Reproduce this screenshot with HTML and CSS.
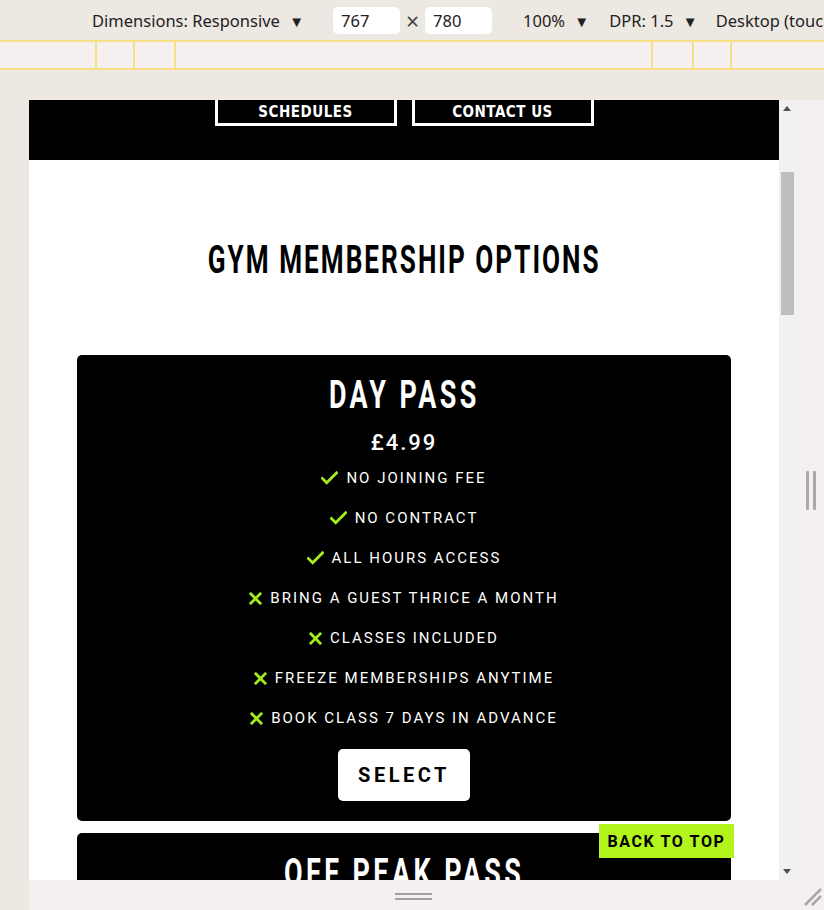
FILE: index.html
```html
<!DOCTYPE html>
<html lang="en">
<head>
<meta charset="utf-8">
<title>Gym Membership Options</title>
<link rel="stylesheet" href="styles.css">
</head>
<body>
<div class="devtools">
  <div class="toolbar">
    <span class="tb-item">Dimensions: Responsive <span class="caret">▼</span></span>
    <span class="dims"><span class="tb-input">767</span><span class="times">×</span><span class="tb-input">780</span></span>
    <span class="tb-item zoomsel">100% <span class="caret">▼</span></span>
    <span class="tb-item dpr">DPR: 1.5 <span class="caret">▼</span></span>
    <span class="tb-item device">Desktop (touch)</span>
  </div>
  <div class="ruler">
    <span class="tick" style="left:95px"></span>
    <span class="tick" style="left:133px"></span>
    <span class="tick" style="left:174px"></span>
    <span class="tick" style="left:651px"></span>
    <span class="tick" style="left:692px"></span>
    <span class="tick" style="left:730px"></span>
  </div>
  <div class="gutter"></div>
  <div class="stage">
    <div class="left-pad"></div>
    <div class="frame">
      <div class="device-row">
        <div class="viewport">
          <header class="site-header">
            <nav class="nav">
              <a class="nav-btn">SCHEDULES</a>
              <a class="nav-btn">CONTACT US</a>
            </nav>
          </header>
          <section class="memberships">
            <h2 class="section-title"><span class="narrow">GYM MEMBERSHIP OPTIONS</span></h2>
            <div class="card">
              <h3 class="card-title"><span class="narrow">DAY PASS</span></h3>
              <p class="price">£4.99</p>
              <ul class="features">
                <li><svg class="ico" viewBox="0 0 18 14"><polyline points="1.5,7.5 6,12 16.5,1.5"/></svg>NO JOINING FEE</li>
                <li><svg class="ico" viewBox="0 0 18 14"><polyline points="1.5,7.5 6,12 16.5,1.5"/></svg>NO CONTRACT</li>
                <li><svg class="ico" viewBox="0 0 18 14"><polyline points="1.5,7.5 6,12 16.5,1.5"/></svg>ALL HOURS ACCESS</li>
                <li><svg class="ico x" viewBox="0 0 14 14"><path d="M2 2 L12 12 M12 2 L2 12"/></svg>BRING A GUEST THRICE A MONTH</li>
                <li><svg class="ico x" viewBox="0 0 14 14"><path d="M2 2 L12 12 M12 2 L2 12"/></svg>CLASSES INCLUDED</li>
                <li><svg class="ico x" viewBox="0 0 14 14"><path d="M2 2 L12 12 M12 2 L2 12"/></svg>FREEZE MEMBERSHIPS ANYTIME</li>
                <li><svg class="ico x" viewBox="0 0 14 14"><path d="M2 2 L12 12 M12 2 L2 12"/></svg>BOOK CLASS 7 DAYS IN ADVANCE</li>
              </ul>
              <a class="select-btn">SELECT</a>
            </div>
            <div class="card">
              <h3 class="card-title"><span class="narrow">OFF PEAK PASS</span></h3>
            </div>
          </section>
          <a class="back-top">BACK TO TOP</a>
        </div>
        <div class="scrollbar">
          <span class="arrow up"></span>
          <span class="thumb"></span>
          <span class="arrow down"></span>
        </div>
        <div class="side-handle"><span></span><span></span></div>
      </div>
      <div class="bottom-handle">
        <span class="hbars"><span></span><span></span></span>
        <svg class="corner" viewBox="0 0 20 20"><path d="M3 19 L19 3 M10 19 L19 10"/></svg>
      </div>
    </div>
  </div>
</div>
</body>
</html>
```

FILE: styles.css
```css
* { box-sizing: border-box; }
html, body { margin: 0; padding: 0; }
body {
  width: 824px;
  height: 910px;
  overflow: hidden;
  background: #ede8e2;
  font-family: "Noto Sans", "Open Sans", sans-serif;
}
.devtools { width: 824px; height: 910px; display: flex; flex-direction: column; }

/* toolbar */
.toolbar {
  height: 40px;
  display: flex;
  align-items: center;
  padding-left: 92px;
  font-size: 16.5px;
  color: #222;
  white-space: nowrap;
  overflow: hidden;
}
.caret { font-size: 15px; margin-left: 5px; }
.dims { display: flex; align-items: center; margin-left: 29px; }
.tb-input {
  width: 67px; height: 27px; background: #fff; border-radius: 5px;
  padding-left: 8px; line-height: 27px;
}
.times { width: 25px; text-align: center; font-size: 23px; line-height: 27px; color: #444; padding-top: 3px; }
.zoomsel { margin-left: 31px; }
.dpr { margin-left: 20px; }
.device { margin-left: 18px; }

.ruler {
  height: 30px;
  position: relative;
  background: #f5f0ef;
  border-top: 2px solid #f7df86;
  border-bottom: 2px solid #f7df86;
}
.tick { position: absolute; top: 0; bottom: 0; width: 2px; background: #f7df86; }
.gutter { height: 30px; }

.stage { flex: 1; display: flex; }
.left-pad { width: 29px; }
.frame { flex: 1; background: #f5f0ef; display: flex; flex-direction: column; }
.device-row { display: flex; height: 780px; }

/* viewport */
.viewport {
  width: 750px; height: 780px; overflow: hidden; position: relative;
  background: #fff;
  font-family: "Roboto", "Inter", sans-serif;
}
.site-header { background: #000; height: 60px; }
.nav { display: flex; justify-content: center; gap: 15px; }
.nav-btn {
  width: 182px; height: 26px;
  border: 3px solid #fff; border-top: none;
  color: #fff; font-weight: 700; font-size: 15px; letter-spacing: 0.5px;
  font-family: "DejaVu Sans Condensed", "DejaVu Sans", sans-serif;
  display: flex; align-items: center; justify-content: center;
}

.narrow {
  display: inline-block;
  transform: scaleX(0.67);
  transform-origin: center;
  white-space: nowrap;
}

.memberships { padding: 78px 48px 0; }
.section-title {
  margin: 0 0 73px;
  text-align: center;
  font-family: "Roboto", sans-serif;
  font-weight: 700; font-size: 39px; line-height: 44px; letter-spacing: 3px;
  color: #000;
}
.card {
  background: #000; border-radius: 5px; color: #fff;
  padding: 18px 0 20px;
  display: flex; flex-direction: column; align-items: center;
  margin-bottom: 12px;
}
.card-title {
  margin: 0;
  font-family: "Roboto", sans-serif;
  font-weight: 700; font-size: 39px; line-height: 44px; letter-spacing: 5px;
  text-align: center;
}
.card-title .narrow { transform: scaleX(0.69); }
.price {
  margin: 11px 0 0;
  font-size: 22px; line-height: 30px; font-weight: 500; letter-spacing: 2px;
}
.features { list-style: none; margin: 0; padding: 0; }
.features li {
  height: 40px;
  display: flex; align-items: center; justify-content: center;
  font-size: 15px; letter-spacing: 2px; color: #fff;
}
.ico { width: 17px; height: 14px; margin-right: 8px; fill: none; stroke: #a4ea1c; stroke-width: 3; stroke-linecap: square; }
.ico.x { width: 13px; height: 13px; stroke-width: 3; }
.select-btn {
  margin-top: 11px;
  width: 132px; height: 52px; background: #fff; border-radius: 5px;
  color: #000; font-weight: 700; font-size: 20px; letter-spacing: 3.5px;
  display: flex; align-items: center; justify-content: center;
}
.back-top {
  position: absolute; left: 570px; top: 724px;
  width: 135px; height: 34px; background: #b2f41c;
  color: #000; font-weight: 700; font-size: 16px; letter-spacing: 1.6px;
  display: flex; align-items: center; justify-content: center;
}

/* scrollbar */
.scrollbar { width: 16px; height: 780px; background: #f1f1f1; position: relative; }
.arrow { position: absolute; left: 4px; width: 0; height: 0; border-left: 4px solid transparent; border-right: 4px solid transparent; }
.arrow.up { top: 6px; border-bottom: 5px solid #505050; }
.arrow.down { bottom: 6px; border-top: 5px solid #505050; }
.thumb { position: absolute; left: 2px; top: 72px; width: 13px; height: 143px; background: #bebebe; }

.side-handle { flex: 1; display: flex; justify-content: center; align-items: center; gap: 4px; padding-left: 2px; }
.side-handle span { width: 3px; height: 39px; background: #a9a9a9; border-radius: 1px; }

.bottom-handle { height: 30px; position: relative; display: flex; justify-content: center; }
.hbars { display: flex; flex-direction: column; gap: 3px; margin-top: 13px; margin-right: 26px; }
.hbars span { width: 37px; height: 2px; background: #a0a0a0; }
.corner { position: absolute; right: 2px; bottom: 4px; width: 20px; height: 20px; fill: none; stroke: #a8a8a8; stroke-width: 2.5; }
```
